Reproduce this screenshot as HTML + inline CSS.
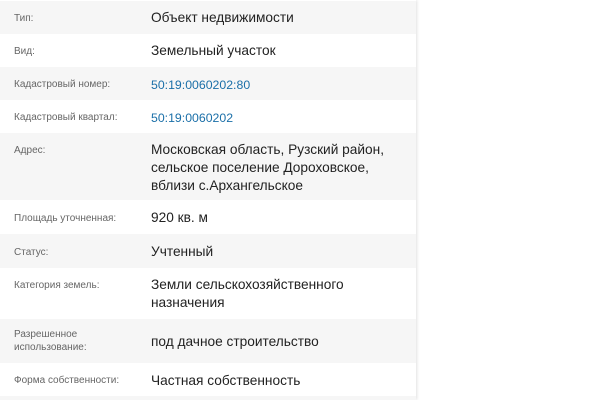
<!DOCTYPE html>
<html><head><meta charset="utf-8"><style>
body{margin:0;width:600px;height:400px;overflow:hidden;background:#fff;font-family:"Liberation Sans","DejaVu Sans",sans-serif}
.panel{position:absolute;left:0;top:0;width:416px;height:400px;box-shadow:1px 0 3px rgba(0,0,0,.12);background:#fff}
.r{position:absolute;left:0;width:416px}
.g{background:#f6f6f6}
.l{position:absolute;left:14px;font-size:10px;color:#666;line-height:13px}
.v{position:absolute;left:151px;font-size:13.7px;color:#222;line-height:18px}
.a{color:#1a6fa8;font-size:12.3px}
</style></head><body><div class="panel">
<div class="r g" style="top:1px;height:33px"><div class="l" style="top:11px">Тип:</div><div class="v" style="top:8px">Объект недвижимости</div></div>
<div class="r" style="top:34px;height:33px"><div class="l" style="top:11px">Вид:</div><div class="v" style="top:8px">Земельный участок</div></div>
<div class="r g" style="top:67px;height:33px"><div class="l" style="top:11px">Кадастровый номер:</div><div class="v a" style="top:9px">50:19:0060202:80</div></div>
<div class="r" style="top:100px;height:33px"><div class="l" style="top:11px">Кадастровый квартал:</div><div class="v a" style="top:9px">50:19:0060202</div></div>
<div class="r g" style="top:133px;height:67px"><div class="l" style="top:11px">Адрес:</div><div class="v" style="top:8px">Московская область, Рузский район,<br>сельское поселение Дороховское,<br>вблизи с.Архангельское</div></div>
<div class="r" style="top:200px;height:34px"><div class="l" style="top:12px">Площадь уточненная:</div><div class="v" style="top:9px">920 кв. м</div></div>
<div class="r g" style="top:234px;height:34px"><div class="l" style="top:12px">Статус:</div><div class="v" style="top:9px">Учтенный</div></div>
<div class="r" style="top:268px;height:51px"><div class="l" style="top:11px">Категория земель:</div><div class="v" style="top:8px">Земли сельскохозяйственного<br>назначения</div></div>
<div class="r g" style="top:319px;height:44px"><div class="l" style="top:9px">Разрешенное<br>использование:</div><div class="v" style="top:14px">под дачное строительство</div></div>
<div class="r" style="top:363px;height:33px"><div class="l" style="top:11px">Форма собственности:</div><div class="v" style="top:9px">Частная собственность</div></div>
<div class="r g" style="top:396px;height:4px"></div>
</div></body></html>
